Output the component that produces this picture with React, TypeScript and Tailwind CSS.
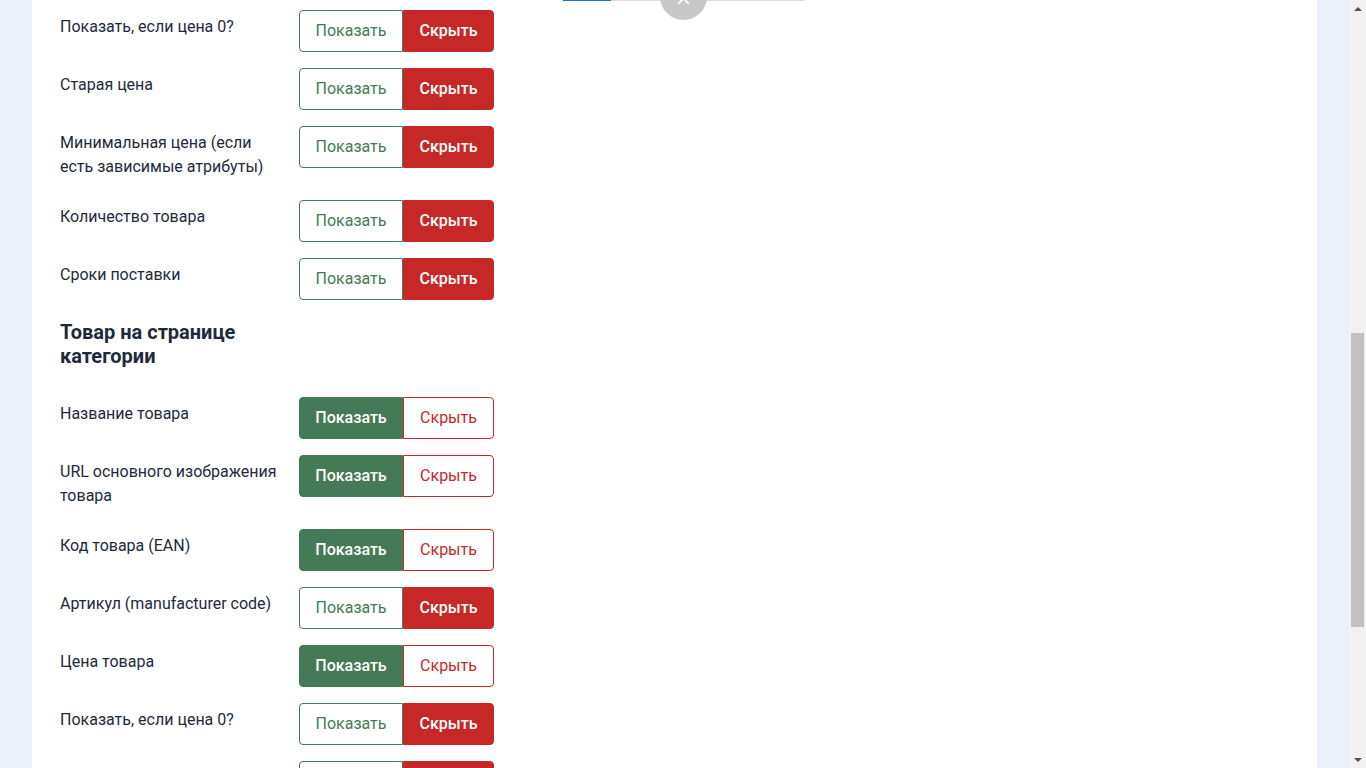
import { useState } from 'react';

type Row = { id: string; label: string; visible: boolean };

const productRows: Row[] = [
  { id: 'zero-price', label: 'Показать, если цена 0?', visible: false },
  { id: 'old-price', label: 'Старая цена', visible: false },
  { id: 'min-price', label: 'Минимальная цена (если есть зависимые атрибуты)', visible: false },
  { id: 'quantity', label: 'Количество товара', visible: false },
  { id: 'delivery', label: 'Сроки поставки', visible: false },
];

const categoryRows: Row[] = [
  { id: 'cat-name', label: 'Название товара', visible: true },
  { id: 'cat-image', label: 'URL основного изображения товара', visible: true },
  { id: 'cat-ean', label: 'Код товара (EAN)', visible: true },
  { id: 'cat-sku', label: 'Артикул (manufacturer code)', visible: false },
  { id: 'cat-price', label: 'Цена товара', visible: true },
  { id: 'cat-zero-price', label: 'Показать, если цена 0?', visible: false },
  { id: 'cat-old-price', label: 'Старая цена', visible: false },
];

function Toggle({ value, onChange }: { value: boolean; onChange: (v: boolean) => void }) {
  return (
    <div className="flex h-[42px] shrink-0 text-[16px] leading-none">
      <button
        type="button"
        onClick={() => onChange(true)}
        className={
          value
            ? 'w-[104px] rounded-l-[4px] border border-[#447a55] bg-[#447a55] font-medium text-white'
            : 'w-[104px] rounded-l-[4px] border border-[#447a55] bg-white text-[#447a55]'
        }
      >
        Показать
      </button>
      <button
        type="button"
        onClick={() => onChange(false)}
        className={
          value
            ? 'w-[91px] rounded-r-[4px] border border-[#c62828] bg-white text-[#c62828]'
            : 'w-[91px] rounded-r-[4px] border border-[#c62828] bg-[#c62828] font-medium text-white'
        }
      >
        Скрыть
      </button>
    </div>
  );
}

function SettingRow({ row }: { row: Row }) {
  const [visible, setVisible] = useState(row.visible);
  return (
    <div className="flex items-start">
      <div className="w-[224px] py-[5px] text-[16px] leading-[24px] text-[#1e2a3b]">{row.label}</div>
      <div className="ml-[15px]">
        <Toggle value={visible} onChange={setVisible} />
      </div>
    </div>
  );
}

export default function App() {
  return (
    <div
      className="flex h-[768px] w-[1366px] overflow-hidden bg-[#eaf0f8]"
      style={{ fontFamily: 'Roboto, "Noto Sans", sans-serif' }}
    >
      <div className="flex flex-1 px-8">
        <div className="flex flex-1 bg-white">
          {/* settings column, scrolled */}
          <div className="flex w-[490px] flex-col pl-7 pt-[10px]">
            <div className="flex flex-col gap-4">
              {productRows.map((r) => (
                <SettingRow key={r.id} row={r} />
              ))}
            </div>
            <h3 className="mt-[20px] w-[224px] text-[20px] font-bold leading-[24px] text-[#1e2a3b]">
              Товар на странице категории
            </h3>
            <div className="mt-[29px] flex flex-col gap-4">
              {categoryRows.map((r) => (
                <SettingRow key={r.id} row={r} />
              ))}
            </div>
          </div>

          {/* preview column, top clipped */}
          <div className="relative ml-[41px] h-[24px] w-[242px]">
            <div className="flex h-[1px]">
              <div className="w-[48px] bg-[#1a73c7]" />
              <div className="flex-1 bg-[#dcdcdc]" />
            </div>
            <div className="absolute left-[97px] top-[-27px] h-[47px] w-[47px] rounded-full bg-[#c8c8c8]">
              <svg
                viewBox="0 0 12 12"
                className="absolute left-[17px] top-[19px] h-[13px] w-[13px]"
                fill="none"
                stroke="white"
                strokeWidth="1.6"
              >
                <path d="M1 1l10 10M11 1L1 11" />
              </svg>
            </div>
          </div>
        </div>
      </div>

      {/* browser scrollbar */}
      <div className="flex w-[17px] flex-col items-center bg-[#f1f1f1]">
        <div className="flex h-[17px] items-center justify-center">
          <div className="h-0 w-0 border-x-[4px] border-b-[4px] border-x-transparent border-b-[#505050]" />
        </div>
        <div className="mt-[316px] h-[294px] w-[13px] bg-[#c1c1c1]" />
        <div className="flex-1" />
        <div className="flex h-[17px] items-center justify-center">
          <div className="h-0 w-0 border-x-[4px] border-t-[4px] border-x-transparent border-t-[#505050]" />
        </div>
      </div>
    </div>
  );
}
